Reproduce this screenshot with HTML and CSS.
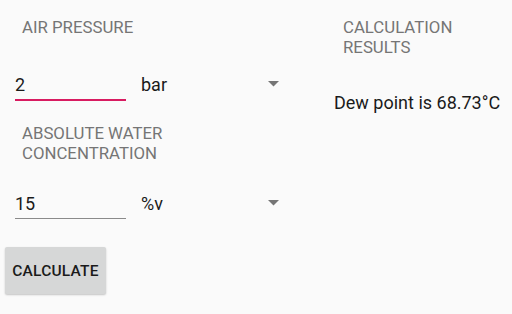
FILE: index.html
```html
<!DOCTYPE html>
<html>
<head>
<meta charset="utf-8">
<link rel="stylesheet" href="styles.css">
</head>
<body>
<div class="page">
  <div class="left">
    <div class="label first">AIR PRESSURE</div>
    <div class="row">
      <div class="field focused">2</div>
      <div class="spinner"><span>bar</span><svg class="arrow" width="11" height="6" viewBox="0 0 11 6"><polygon points="0,0 11,0 5.5,5.5" fill="#757575"/></svg></div>
    </div>
    <div class="label second">ABSOLUTE WATER<br>CONCENTRATION</div>
    <div class="row row2">
      <div class="field">15</div>
      <div class="spinner"><span>%v</span><svg class="arrow" width="11" height="6" viewBox="0 0 11 6"><polygon points="0,0 11,0 5.5,5.5" fill="#757575"/></svg></div>
    </div>
    <div class="btn">CALCULATE</div>
  </div>
  <div class="right">
    <div class="label first rlabel">CALCULATION<br>RESULTS</div>
    <div class="result">Dew point is 68.73°C</div>
  </div>
</div>
</body>
</html>
```
FILE: styles.css
```css
html, body {
  margin: 0;
  padding: 0;
  background: #fafafa;
  width: 512px;
  height: 314px;
  overflow: hidden;
}
body {
  font-family: Roboto, "Liberation Sans", sans-serif;
  color: #212121;
}
.page {
  display: grid;
  grid-template-columns: 334px 1fr;
}
.left {
  padding-left: 5px;
  display: flex;
  flex-direction: column;
  align-items: flex-start;
}
.label {
  font-size: 16.8px;
  line-height: 20px;
  color: #757575;
  margin-left: 17px;
}
.label.first {
  margin-top: 16.5px;
}
.label.second {
  margin-top: 22px;
}
.row {
  display: flex;
  align-items: flex-start;
  margin-left: 10px;
  margin-top: 37.5px;
}
.row2 {
  margin-top: 30px;
}
.field {
  width: 111px;
  font-size: 18px;
  line-height: 22px;
  padding-bottom: 3px;
  border-bottom: 1px solid #8a8a8a;
  margin-bottom: 1px;
  color: #1a1a1a;
}
.field.focused {
  border-bottom: 2px solid #d81b60;
  margin-bottom: 0;
}
.spinner {
  margin-left: 15px;
  width: 138px;
  display: flex;
  justify-content: space-between;
  align-items: center;
  font-size: 18px;
  line-height: 22px;
  color: #1a1a1a;
}
.arrow {
  margin-top: -2px;
  display: block;
}
.btn {
  margin-top: 27px;
  width: 101px;
  height: 47px;
  background: #d6d7d7;
  border-radius: 2px;
  box-shadow: 0 1px 2px rgba(0,0,0,0.22);
  display: flex;
  align-items: center;
  justify-content: center;
  font-size: 15.5px;
  font-weight: 500;
  letter-spacing: 0.2px;
  color: #1a1a1a;
}
.rlabel {
  margin-left: 9px;
}
.right {
  display: flex;
  flex-direction: column;
}
.result {
  margin-top: 35.5px;
  font-size: 18px;
  line-height: 22px;
  color: #1a1a1a;
}
```
